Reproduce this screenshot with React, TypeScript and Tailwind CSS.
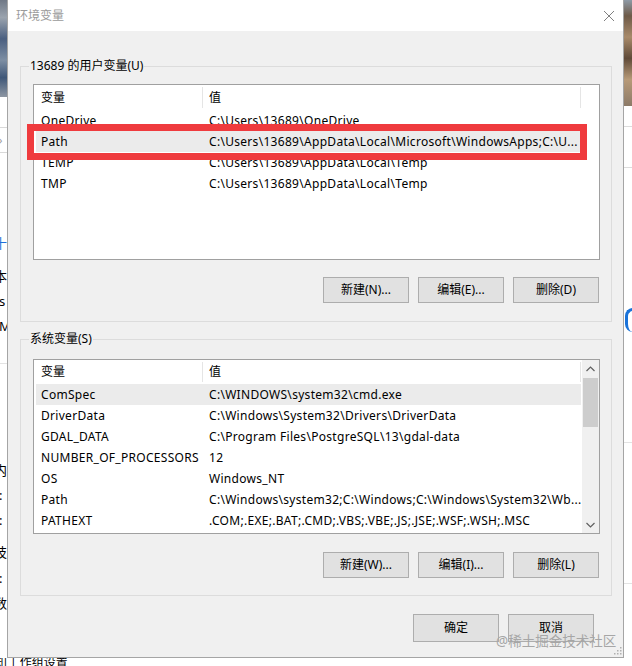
import React from "react";

type Row = [string, string];

const userVars: Row[] = [
  ["OneDrive", "C:\\Users\\13689\\OneDrive"],
  ["Path", "C:\\Users\\13689\\AppData\\Local\\Microsoft\\WindowsApps;C:\\U..."],
  ["TEMP", "C:\\Users\\13689\\AppData\\Local\\Temp"],
  ["TMP", "C:\\Users\\13689\\AppData\\Local\\Temp"],
];

const sysVars: Row[] = [
  ["ComSpec", "C:\\WINDOWS\\system32\\cmd.exe"],
  ["DriverData", "C:\\Windows\\System32\\Drivers\\DriverData"],
  ["GDAL_DATA", "C:\\Program Files\\PostgreSQL\\13\\gdal-data"],
  ["NUMBER_OF_PROCESSORS", "12"],
  ["OS", "Windows_NT"],
  ["Path", "C:\\Windows\\system32;C:\\Windows;C:\\Windows\\System32\\Wb..."],
  ["PATHEXT", ".COM;.EXE;.BAT;.CMD;.VBS;.VBE;.JS;.JSE;.WSF;.WSH;.MSC"],
];

function Header({ h }: { h: string }) {
  return (
    <div className={`flex ${h} shrink-0`}>
      <div className="w-[168px] pl-[7px] flex items-center">变量</div>
      <div className="w-[1px] my-[2px] bg-[#e5e5e5]" />
      <div className="w-[377px] pl-[6px] flex items-center">值</div>
      <div className="w-[1px] my-[2px] bg-[#e5e5e5]" />
      <div className="flex-1" />
    </div>
  );
}

function ListRow({ row, hl }: { row: Row; hl: boolean }) {
  return (
    <div
      className={`ml-[2px] w-[545px] h-[21px] flex items-center shrink-0 tracking-[0.3px] ${
        hl ? "bg-[#ebebeb]" : ""
      }`}
    >
      <div className="w-[167px] pl-[5px] whitespace-nowrap overflow-hidden">{row[0]}</div>
      <div className="w-[378px] pl-[6px] whitespace-nowrap overflow-hidden">{row[1]}</div>
    </div>
  );
}

function Chevron({ up }: { up: boolean }) {
  return (
    <svg width="9" height="6" viewBox="0 0 9 6">
      <path
        d={up ? "M0.5 5 L4.5 1 L8.5 5" : "M0.5 1 L4.5 5 L8.5 1"}
        fill="none"
        stroke="#606060"
        strokeWidth="1.2"
      />
    </svg>
  );
}

function Scrollbar() {
  return (
    <div className="w-[17px] bg-[#f0f0f0] flex flex-col shrink-0">
      <div className="h-[18px] flex items-center justify-center">
        <Chevron up />
      </div>
      <div className="mx-[1px] h-[49px] bg-[#cdcdcd]" />
      <div className="flex-1" />
      <div className="h-[17px] flex items-center justify-center">
        <Chevron up={false} />
      </div>
    </div>
  );
}

function Btn({ label, w, h }: { label: string; w: string; h: string }) {
  return (
    <div
      className={`${w} ${h} border border-[#adadad] bg-[#e1e1e1] flex items-center justify-center`}
    >
      {label}
    </div>
  );
}

function ButtonRow({ labels, mt }: { labels: string[]; mt: string }) {
  return (
    <div className={`${mt} flex justify-end gap-[9px] pr-[1px]`}>
      {labels.map((l) => (
        <Btn key={l} label={l} w="w-[86px]" h="h-[26px]" />
      ))}
    </div>
  );
}

function Dialog() {
  return (
    <div className="w-[617px] h-[658px] border-x border-b border-[#a5a5a5] flex flex-col shrink-0">
      {/* title bar */}
      <div className="h-[31px] bg-white flex items-center justify-between pl-[8px] pr-[9px] shrink-0">
        <span className="text-[#9a9a9a] leading-[16px]">环境变量</span>
        <svg width="10" height="10" viewBox="0 0 10 10">
          <path d="M0 0 L10 10 M10 0 L0 10" stroke="#808080" strokeWidth="1" />
        </svg>
      </div>
      {/* body */}
      <div className="flex-1 bg-[#f0f0f0] pl-[12px] pr-[11px] pt-[35px] flex flex-col">
        {/* user vars */}
        <div className="relative h-[256px] border border-[#dcdcdc] pt-[17px] pl-[12px] pr-[11px] flex flex-col shrink-0">
          <div className="absolute left-[8px] top-[-9px] px-[1px] bg-[#f0f0f0] leading-[16px]">
            13689 的用户变量(U)
          </div>
          <div className="relative h-[176px] border border-[#a0a0a0] bg-white flex flex-col shrink-0">
            <Header h="h-[25px]" />
            {userVars.map((r, i) => (
              <ListRow key={r[0]} row={r} hl={i === 1} />
            ))}
            <div className="absolute left-[-7px] top-[39px] w-[560px] h-[36px] border-[7px] border-[#ef3b3e]" />
          </div>
          <ButtonRow labels={["新建(N)...", "编辑(E)...", "删除(D)"]} mt="mt-[17px]" />
        </div>
        {/* system vars */}
        <div className="relative mt-[17px] h-[257px] border border-[#dcdcdc] pt-[19px] pl-[12px] pr-[11px] flex flex-col shrink-0">
          <div className="absolute left-[8px] top-[-9px] px-[1px] bg-[#f0f0f0] leading-[16px]">
            系统变量(S)
          </div>
          <div className="h-[175px] border border-[#a0a0a0] bg-white flex shrink-0">
            <div className="flex-1 flex flex-col overflow-hidden">
              <Header h="h-[24px]" />
              {sysVars.map((r, i) => (
                <ListRow key={r[0] + i} row={r} hl={i === 0} />
              ))}
            </div>
            <Scrollbar />
          </div>
          <ButtonRow labels={["新建(W)...", "编辑(I)...", "删除(L)"]} mt="mt-[18px]" />
        </div>
        {/* ok / cancel */}
        <div className="mt-[18px] flex justify-end gap-[9px] pr-[18px]">
          <Btn label="确定" w="w-[86px]" h="h-[28px]" />
          <Btn label="取消" w="w-[86px]" h="h-[28px]" />
        </div>
      </div>
    </div>
  );
}

function LeftStrip() {
  return (
    <div className="w-[7px] h-[658px] overflow-hidden bg-white flex flex-col shrink-0 text-[13px] leading-[16px]">
      <div className="h-[97px] bg-[linear-gradient(180deg,#6f7886_0%,#9aa3ae_18%,#4a5f80_40%,#7d8ea3_62%,#3f5778_80%,#8d96a2_100%)] shrink-0" />
      <div className="h-[30px] shrink-0" />
      <div className="h-[1px] bg-[#d9d9d9] shrink-0" />
      <div className="h-[24px] flex items-center text-[#9a9a9a] text-[11px] -ml-[1px] shrink-0">›</div>
      <div className="h-[1px] bg-[#d9d9d9] shrink-0" />
      <div className="h-[82px] shrink-0" />
      <div className="h-[20px] text-[#1e6fd9] -ml-[6px] shrink-0">十</div>
      <div className="h-[13px] shrink-0" />
      <div className="h-[25px] -ml-[6px] shrink-0">本</div>
      <div className="h-[25px] -ml-[1px] shrink-0">s</div>
      <div className="h-[25px] -ml-[1px] shrink-0">M</div>
      <div className="h-[20px] shrink-0" />
      <div className="h-[1px] bg-[#e3e3e3] shrink-0" />
      <div className="h-[98px] shrink-0" />
      <div className="h-[25px] -ml-[6px] shrink-0">内</div>
      <div className="h-[25px] -ml-[1px] shrink-0">:</div>
      <div className="h-[32px] -ml-[1px] shrink-0">:</div>
      <div className="h-[26px] -ml-[6px] shrink-0">技</div>
      <div className="h-[25px] -ml-[1px] shrink-0">:</div>
      <div className="h-[25px] -ml-[6px] shrink-0">数</div>
    </div>
  );
}

function RightStrip() {
  return (
    <div className="flex-1 h-[658px] overflow-hidden bg-white flex flex-col">
      <div className="h-[106px] bg-[linear-gradient(180deg,#8e9aa6_0%,#6e5a48_15%,#a88a6a_35%,#5f4a38_55%,#b79a78_75%,#8c7a68_100%)] shrink-0" />
      <div className="h-[20px] shrink-0" />
      <div className="h-[1px] bg-[#dcdcdc] shrink-0" />
      <div className="h-[40px] shrink-0" />
      <div className="h-[1px] bg-[#dcdcdc] shrink-0" />
      <div className="h-[140px] shrink-0" />
      <div className="h-[24px] shrink-0 pl-[1px]">
        <div className="w-[16px] h-[24px] rounded-full border-t-[3px] border-l-[3px] border-[#1a73d9]" />
      </div>
      <div className="h-[110px] shrink-0" />
      <div className="h-[1px] bg-[#e3e3e3] shrink-0" />
      <div className="h-[140px] shrink-0" />
      <div className="h-[1px] bg-[#e3e3e3] shrink-0" />
    </div>
  );
}

export default function App() {
  return (
    <div className="relative w-[632px] h-[666px] overflow-hidden bg-white font-['Noto_Sans','Noto_Sans_CJK_SC',sans-serif] text-[12px] leading-[16px] text-black">
      <div className="flex h-[658px]">
        <LeftStrip />
        <Dialog />
        <RightStrip />
      </div>
      <div className="h-[8px] overflow-hidden bg-white">
        <div className="-ml-[5px] -mt-[3px] whitespace-nowrap text-[12px] leading-[16px]">
          知 | 作组设置
        </div>
      </div>
      {/* watermark */}
      <div className="absolute left-[496px] top-[633px] text-[13.5px] leading-[16px] text-[#a6a6a6] whitespace-nowrap">
        @稀土掘金技术社区
      </div>
      {/* resize grip */}
      <svg className="absolute left-[614px] top-[647px]" width="8" height="8" viewBox="0 0 8 8">
        <rect x="6" y="0" width="1.5" height="1.5" fill="#b0b0b0" />
        <rect x="3" y="3" width="1.5" height="1.5" fill="#b0b0b0" />
        <rect x="6" y="3" width="1.5" height="1.5" fill="#b0b0b0" />
        <rect x="0" y="6" width="1.5" height="1.5" fill="#b0b0b0" />
        <rect x="3" y="6" width="1.5" height="1.5" fill="#b0b0b0" />
        <rect x="6" y="6" width="1.5" height="1.5" fill="#b0b0b0" />
      </svg>
    </div>
  );
}
